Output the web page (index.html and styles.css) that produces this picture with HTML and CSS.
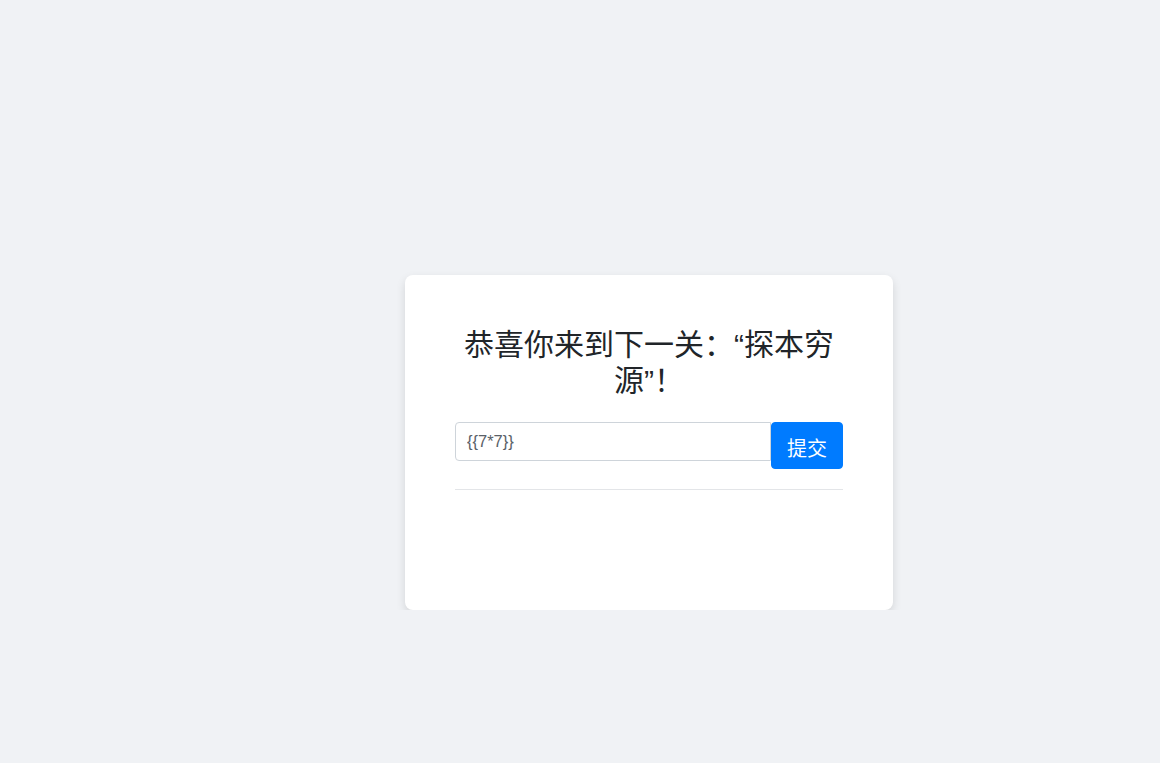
FILE: index.html
```html
<!DOCTYPE html>
<html lang="zh-CN">
<head>
<meta charset="utf-8">
<title>探本穷源</title>
<link rel="stylesheet" href="styles.css">
</head>
<body>
<div class="page">
  <div class="card">
    <h2 class="title">恭喜你来到下一关：“探本穷源”！</h2>
    <form class="form-row">
      <input class="field" type="text" value="{{7*7}}">
      <button class="btn" type="button">提交</button>
    </form>
    <hr class="divider">
    <div class="result"></div>
  </div>
</div>
</body>
</html>
```

FILE: styles.css
```css
* { box-sizing: border-box; }
html, body {
  margin: 0;
  padding: 0;
  background: #f0f2f5;
  font-family: "Liberation Sans", "Noto Sans CJK SC", sans-serif;
  color: #212529;
}
.page {
  padding: 275px 0 0 405px;
}
.card {
  width: 488px;
  height: 335px;
  background: #fff;
  border-radius: 8px;
  padding: 50px;
  box-shadow: 0 4px 10px rgba(0, 0, 0, 0.12);
}
.title {
  margin: 2px 0 23px;
  font-size: 30px;
  font-weight: 400;
  line-height: 36px;
  text-align: center;
  color: #212529;
}
.form-row {
  display: flex;
  align-items: flex-start;
  margin: 0;
}
.field {
  flex: 1;
  height: 39px;
  padding: 6px 11px;
  font-family: "Liberation Sans", "Noto Sans CJK SC", sans-serif;
  font-size: 16.5px;
  color: #5a6168;
  border: 1px solid #ced4da;
  border-radius: 4px 0 0 4px;
  background: #fff;
  outline: none;
}
.btn {
  width: 72px;
  height: 47px;
  padding: 3px 0 0;
  white-space: nowrap;
  font-family: "Liberation Sans", "Noto Sans CJK SC", sans-serif;
  font-size: 20px;
  color: #fff;
  background: #007bff;
  border: 1px solid #007bff;
  border-radius: 4px;
}
.divider {
  margin: 20px 0 0;
  border: 0;
  border-top: 1px solid #e3e5e8;
}
```
